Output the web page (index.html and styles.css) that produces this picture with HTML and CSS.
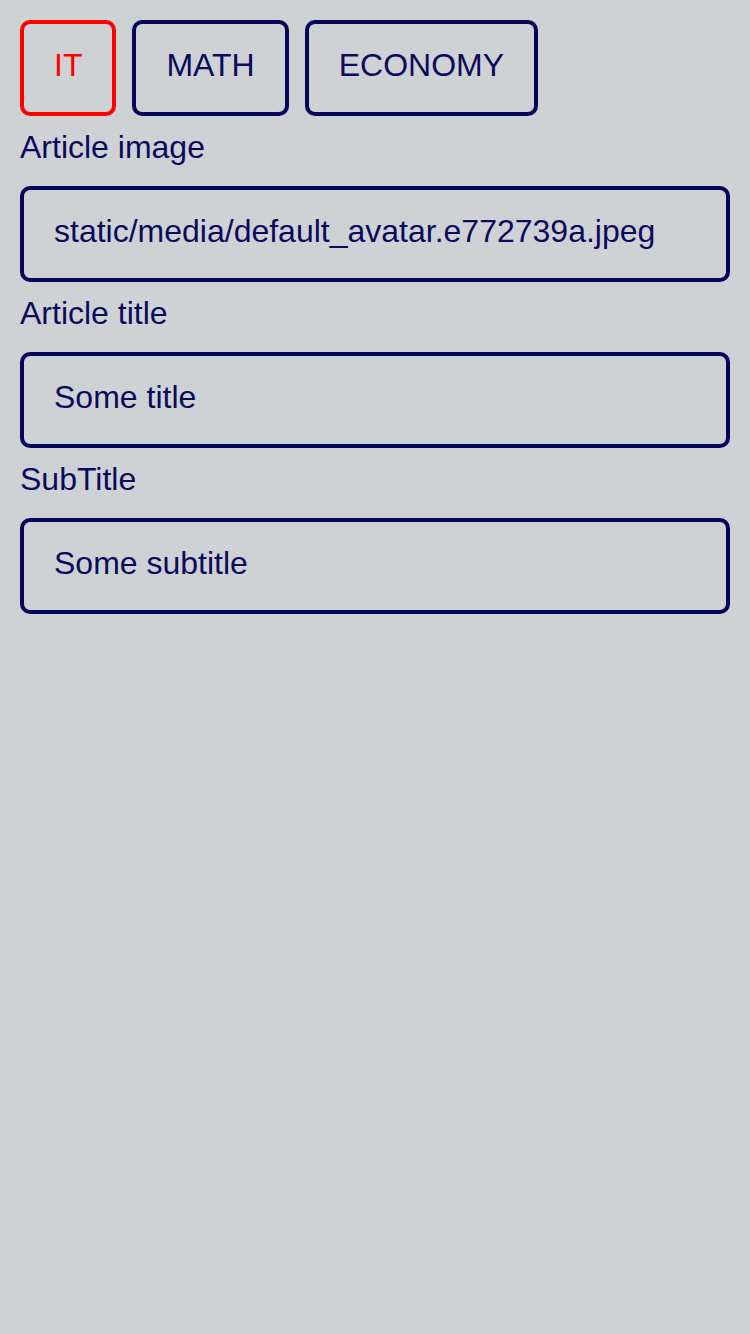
FILE: index.html
```html
<!DOCTYPE html>
<html>
<head>
<meta charset="utf-8">
<link rel="stylesheet" href="styles.css">
</head>
<body>
<div class="page">
  <div class="tags">
    <button class="tag active">IT</button>
    <button class="tag">MATH</button>
    <button class="tag">ECONOMY</button>
  </div>
  <label class="label">Article image</label>
  <input class="field" type="text" value="static/media/default_avatar.e772739a.jpeg">
  <label class="label">Article title</label>
  <input class="field" type="text" value="Some title">
  <label class="label">SubTitle</label>
  <input class="field" type="text" value="Some subtitle">
</div>
</body>
</html>
```

FILE: styles.css
```css
html, body {
  margin: 0;
  padding: 0;
  background: #cfd2d5;
  height: 100%;
}
body {
  font-family: "Liberation Sans", Arial, sans-serif;
  color: #0b0b5c;
}
.page {
  padding: 20px;
  display: flex;
  flex-direction: column;
}
.tags {
  display: flex;
  gap: 16px;
}
.tag {
  box-sizing: border-box;
  height: 96px;
  padding: 0 30px 6px;
  border: 4px solid #07075a;
  border-radius: 10px;
  background: transparent;
  color: #0b0b5c;
  font-family: inherit;
  font-size: 32px;
  line-height: 37px;
}
.tag.active {
  border-color: #ff0000;
  color: #ff0000;
}
.label {
  display: block;
  font-size: 32px;
  line-height: 37px;
  margin-top: 13px;
  margin-bottom: 20px;
}
.field {
  box-sizing: border-box;
  width: 710px;
  height: 96px;
  margin: 0;
  padding: 0 30px 6px;
  border: 4px solid #07075a;
  border-radius: 10px;
  background: transparent;
  color: #0b0b5c;
  font-family: inherit;
  font-size: 32px;
  outline: none;
}
```
